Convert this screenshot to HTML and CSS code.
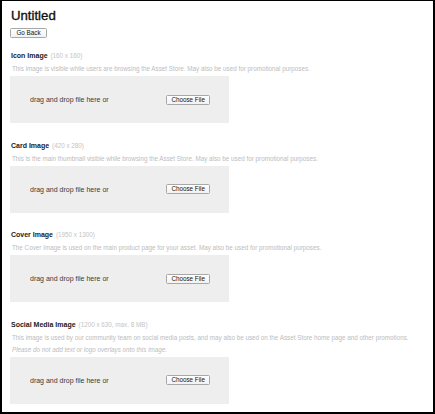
FILE: index.html
```html
<!DOCTYPE html>
<html>
<head>
<meta charset="utf-8">
<title>Untitled</title>
<link rel="stylesheet" href="styles.css">
</head>
<body>
<div class="page">
  <h1 class="title">Untitled</h1>
  <button class="btn back-btn">Go Back</button>

  <section class="asset">
    <div class="label">Icon Image <span class="dims">(160 x 160)</span></div>
    <p class="desc">This image is visible while users are browsing the Asset Store. May also be used for promotional purposes.</p>
    <div class="drop">
      <span class="drop-text">drag and drop file here or</span>
      <button class="btn">Choose File</button>
    </div>
  </section>

  <section class="asset">
    <div class="label">Card Image <span class="dims">(420 x 280)</span></div>
    <p class="desc">This is the main thumbnail visible while browsing the Asset Store. May also be used for promotional purposes.</p>
    <div class="drop">
      <span class="drop-text">drag and drop file here or</span>
      <button class="btn">Choose File</button>
    </div>
  </section>

  <section class="asset">
    <div class="label">Cover Image <span class="dims">(1950 x 1300)</span></div>
    <p class="desc">The Cover Image is used on the main product page for your asset. May also be used for promotional purposes.</p>
    <div class="drop">
      <span class="drop-text">drag and drop file here or</span>
      <button class="btn">Choose File</button>
    </div>
  </section>

  <section class="asset">
    <div class="label">Social Media Image <span class="dims">(1200 x 630, max. 8 MB)</span></div>
    <p class="desc">This image is used by our community team on social media posts, and may also be used on the Asset Store home page and other promotions.</p>
    <p class="desc note">Please do not add text or logo overlays onto this image.</p>
    <div class="drop">
      <span class="drop-text">drag and drop file here or</span>
      <button class="btn">Choose File</button>
    </div>
  </section>
</div>
</body>
</html>
```
FILE: styles.css
```css
* { box-sizing: border-box; }
html, body {
  margin: 0;
  padding: 0;
  background: #fff;
}
body {
  font-family: "Liberation Sans", Arial, Helvetica, sans-serif;
  color: #222;
}
.page {
  width: 435px;
  height: 414px;
  overflow: hidden;
  border-style: solid;
  border-color: #000;
  border-width: 1px 2px 2px 2px;
  padding: 7px 0 0 8px;
  display: flex;
  flex-direction: column;
  align-items: flex-start;
}
.title {
  margin: 0;
  font-size: 13.2px;
  line-height: 16px;
  font-weight: normal;
  -webkit-text-stroke: 0.35px #111;
  color: #111;
  padding-left: 1px;
}
.btn {
  font-family: "Liberation Sans", Arial, Helvetica, sans-serif;
  font-size: 6.3px;
  line-height: 8px;
  height: 10px;
  padding: 0 4px;
  margin: 0;
  background: linear-gradient(#ffffff, #f2f2f2);
  border: 1px solid #a8a8a8;
  border-radius: 1.5px;
  color: #111;
}
.back-btn {
  margin-top: 4px;
  width: 37px;
  padding: 0;
}
.asset {
  display: flex;
  flex-direction: column;
  align-items: flex-start;
  margin-top: 13px;
}
.asset + .asset { margin-top: 17.5px; }
.label {
  font-size: 7px;
  line-height: 10px;
  font-weight: bold;
  color: #222;
  margin-bottom: 2px;
  padding-left: 1px;
}
.dims {
  font-weight: normal;
  font-size: 6.3px;
  color: #c4c4c4;
  margin-left: 1px;
}
.desc {
  margin: 0;
  font-size: 6.3px;
  line-height: 12px;
  color: #bcbcbc;
  padding-left: 2px;
  white-space: nowrap;
}
.note { font-style: italic; }
.drop {
  margin-top: 1px;
  width: 219px;
  height: 47px;
  background: #eeeeee;
  display: flex;
  align-items: center;
  justify-content: space-between;
  padding: 0 19px 0 20px;
}
.drop-text {
  font-size: 7px;
  color: #3a3a3a;
}
```
